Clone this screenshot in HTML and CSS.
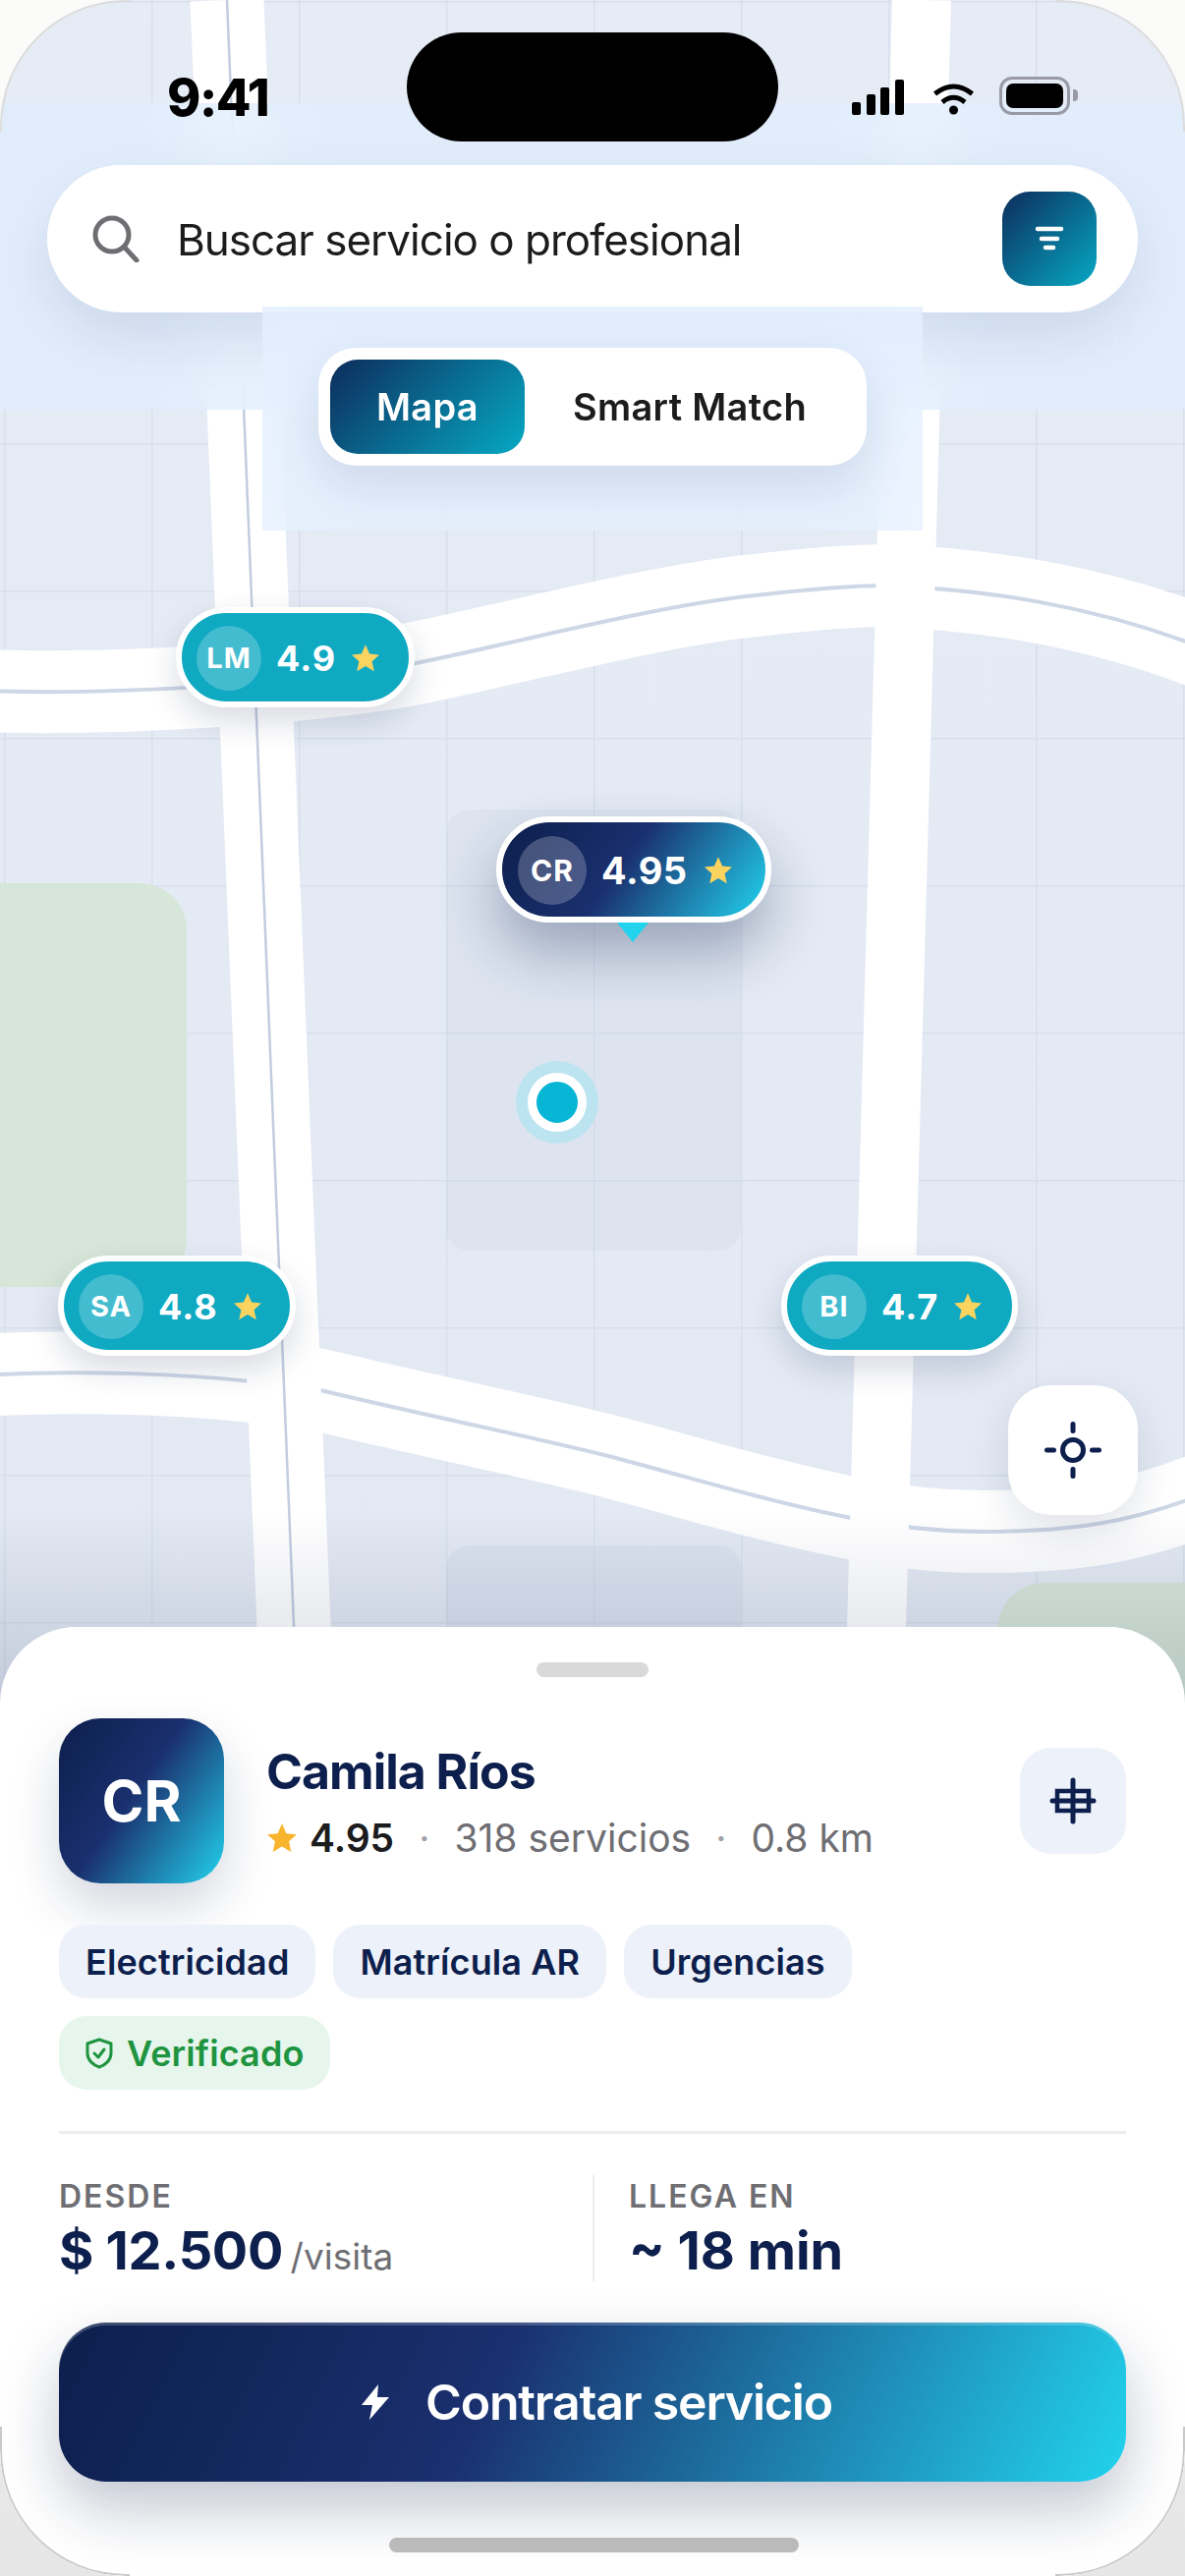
FILE: index.html
```html
<!DOCTYPE html>
<html lang="en">

<head>
  <meta charset="UTF-8">
  <title>Buscar servicio</title>
  <link rel="stylesheet" href="styles.css">
</head>

<body>
  <svg class="defs" width="0" height="0">
    <symbol id="star" viewBox="0 0 24 24">
      <path d="M12 1l3.3 7.400 7.900.8-5.900 5.300 1.700 8L12 18.400l-7 4.100 1.700-8L.8 9.200l7.900-.8z" />
    </symbol>
  </svg>

  <div class="phone">
    <div class="map">
      <svg class="map-canvas" viewBox="0 0 1206 1800" width="1206" height="1800">
        <defs>
          <pattern id="grid" x="4" y="1" width="150" height="150" patternUnits="userSpaceOnUse">
            <path d="M0 0V150M0 0H150" fill="none" stroke="#d8dfeb" stroke-width="3" />
          </pattern>
        </defs>
        <rect width="1206" height="1800" fill="url(#grid)" />
        <rect x="454" y="824" width="300" height="449" rx="24" fill="#c3cde0" opacity=".2" />
        <rect x="454" y="1573" width="300" height="300" rx="24" fill="#c3cde0" opacity=".25" />
        <rect x="-60" y="899" width="250" height="411" rx="48" fill="#d6e6d8" />
        <rect x="1015" y="1611" width="260" height="300" rx="48" fill="#d6e6d8" />

        <path class="road" d="M-20 703C120 708 323 695 423 675C523 655 669 616 769 606C830 599 880 596 900 596C1000 600 1110 615 1226 660" />
        <path class="road-line" d="M-20 703C120 708 323 695 423 675C523 655 669 616 769 606C830 599 880 596 900 596C1000 600 1110 615 1226 660" />
        <path class="road" d="M-20 1400C60 1395 200 1395 326 1415C430 1440 530 1460 615 1481C700 1503 780 1528 866 1545C920 1556 960 1559 1000 1559C1090 1559 1150 1550 1226 1520" />
        <path class="road-line" d="M-20 1400C60 1395 200 1395 326 1415C430 1440 530 1460 615 1481C700 1503 780 1528 866 1545C920 1556 960 1559 1000 1559C1090 1559 1150 1550 1226 1520" />

        <path class="road road-v" d="M231 0L305 1800" />
        <path class="road-line thin" d="M231 0L305 1800" />
        <path class="road road-w" d="M938 0L888 1800" />
      </svg>
      <div class="map-fade"></div>

      <div class="you-dot"><span></span></div>

      <div class="pin pin-lm">
        <span class="pin-avatar">LM</span>
        <span class="pin-score">4.9</span>
        <svg class="pin-star"><use href="#star" /></svg>
      </div>

      <div class="pin pin-main">
        <span class="pin-avatar">CR</span>
        <span class="pin-score">4.95</span>
        <svg class="pin-star"><use href="#star" /></svg>
        <i class="pin-tail"></i>
      </div>

      <div class="pin pin-sa">
        <span class="pin-avatar">SA</span>
        <span class="pin-score">4.8</span>
        <svg class="pin-star"><use href="#star" /></svg>
      </div>

      <div class="pin pin-bi">
        <span class="pin-avatar">BI</span>
        <span class="pin-score">4.7</span>
        <svg class="pin-star"><use href="#star" /></svg>
      </div>

      <button class="locate">
        <svg width="60" height="60" viewBox="0 0 60 60" fill="none" stroke="#0d1f4c" stroke-width="5" stroke-linecap="round">
          <circle cx="30" cy="30" r="10.500" />
          <path d="M30 3.500V10.500M30 49.500V56.500M3.500 30H10.500M49.500 30H56.500" />
        </svg>
      </button>
    </div>

    <div class="glass-band"></div>

    <div class="status">
      <span class="clock">9:41</span>
      <div class="island"></div>
      <div class="status-icons">
        <svg width="53" height="36" viewBox="0 0 53 36">
          <rect x="0" y="23" width="9" height="13" rx="2" />
          <rect x="15" y="15" width="9" height="21" rx="2" />
          <rect x="29" y="8" width="9" height="28" rx="2" />
          <rect x="44" y="0" width="9" height="36" rx="2" />
        </svg>
        <svg width="41" height="32" viewBox="0 0 41 32" fill="none" stroke="#000" stroke-width="5">
          <path d="M1.500 10.500Q20.500 -4.500 39.500 10.500" />
          <path d="M9 19Q20.500 9.500 32 19" />
          <circle cx="20.500" cy="27" r="4.500" fill="#000" stroke="none" />
        </svg>
        <div class="battery"><span></span></div>
      </div>
    </div>

    <div class="search">
      <svg class="search-icon" width="48" height="48" viewBox="0 0 48 48" fill="none" stroke="#6e6e73" stroke-width="5" stroke-linecap="round">
        <circle cx="20" cy="20" r="17" />
        <path d="M33 33L45 46" />
      </svg>
      <span class="search-text">Buscar servicio o profesional</span>
      <button class="filter">
        <svg width="30" height="26" viewBox="0 0 30 26" fill="none" stroke="#fff" stroke-width="4.500" stroke-linecap="round">
          <path d="M3 3H27M7 13H23M11 22H19" />
        </svg>
      </button>
    </div>

    <div class="glass-panel"></div>

    <div class="segment">
      <span class="seg-item seg-active">Mapa</span>
      <span class="seg-item">Smart Match</span>
    </div>

    <div class="sheet">
      <div class="handle"></div>

      <div class="pro">
        <div class="pro-avatar">CR</div>
        <div class="pro-info">
          <h2 class="pro-name">Camila Ríos</h2>
          <div class="pro-meta">
            <svg class="meta-star"><use href="#star" /></svg>
            <b>4.95</b>
            <i>·</i>
            <span>318 servicios</span>
            <i>·</i>
            <span>0.8 km</span>
          </div>
        </div>
        <button class="pro-action">
          <svg width="52" height="52" viewBox="0 0 52 52" fill="none" stroke="#0d1f4c" stroke-width="5" stroke-linecap="round">
            <rect x="10" y="16" width="32" height="20" stroke-width="4.500" stroke-linecap="butt" />
            <path d="M26 5V47M5 26H47" />
          </svg>
        </button>
      </div>

      <div class="chips">
        <span class="chip">Electricidad</span>
        <span class="chip">Matrícula AR</span>
        <span class="chip">Urgencias</span>
        <span class="chip chip-ok">
          <svg width="28" height="32" viewBox="0 0 28 32" fill="none" stroke="#1f9440" stroke-width="3" stroke-linejoin="round" stroke-linecap="round">
            <path d="M14 2L26 6V16C26 23 20 28 14 30C8 28 2 23 2 16V6Z" />
            <path d="M9 16L13 20L19 12" />
          </svg>
          Verificado
        </span>
      </div>

      <div class="stats">
        <div class="stat">
          <div class="stat-label">DESDE</div>
          <div class="stat-value">$ 12.500 <small>/visita</small></div>
        </div>
        <div class="stat stat-right">
          <div class="stat-label">LLEGA EN</div>
          <div class="stat-value">~ 18 min</div>
        </div>
      </div>

      <button class="cta">
        <svg width="30" height="36" viewBox="0 0 30 36" fill="#fff">
          <path d="M18 0L1 21H12L9 36L29 13H17Z" />
        </svg>
        Contratar servicio
      </button>

      <div class="home-bar"></div>
    </div>
  </div>
</body>

</html>
```

FILE: styles.css
```css
* {
  box-sizing: border-box;
}

html,
body {
  margin: 0;
  height: 100%;
  overflow: hidden;
}

body {
  background: linear-gradient(180deg, #fbfbfa 0%, #f4f4f4 60%, #e6e6e6 100%);
  font-family: Inter, "Liberation Sans", sans-serif;
  color: #1c1c1e;
}

button {
  border: none;
  padding: 0;
  font-family: inherit;
  cursor: pointer;
}

.defs {
  position: absolute;
}

.phone {
  position: relative;
  width: 1206px;
  height: 2622px;
  display: flex;
  flex-direction: column;
  overflow: hidden;
  border-radius: 128px;
}

/* thin frame, only seen on the rounded corners */
.phone::before,
.phone::after {
  content: "";
  position: absolute;
  z-index: 5;
  left: 0;
  right: 0;
  pointer-events: none;
  -webkit-mask-image: linear-gradient(90deg, #000 132px, transparent 132px, transparent 1074px, #000 1074px);
  mask-image: linear-gradient(90deg, #000 132px, transparent 132px, transparent 1074px, #000 1074px);
}

.phone::before {
  top: 0;
  height: 132px;
  border: 2px solid #dcdcda;
  border-bottom: none;
  border-radius: 128px 128px 0 0;
}

.phone::after {
  bottom: 0;
  height: 150px;
  border: 2px solid #c9c9c9;
  border-top: none;
  border-radius: 0 0 128px 128px;
}

/* map canvas */
.map {
  position: relative;
  flex: 1;
  margin-bottom: -80px;
  overflow: hidden;
  background: linear-gradient(180deg, #e6ecf5 0%, #e3e9f3 100%);
}

.map-canvas {
  position: absolute;
  top: 0;
  left: 0;
}

.road {
  fill: none;
  stroke: #fff;
  stroke-width: 84;
}

.road-v {
  stroke-width: 75;
}

.road-w {
  stroke-width: 60;
}

.road-line {
  fill: none;
  stroke: #cdd7e6;
  stroke-width: 4;
}

.road-line.thin {
  stroke: #c3cddf;
  stroke-width: 2.500;
}

.map-fade {
  position: absolute;
  left: 0;
  right: 0;
  bottom: 0;
  height: 200px;
  background: linear-gradient(180deg, rgba(13, 31, 76, 0) 0%, rgba(13, 31, 76, 0.16) 100%);
}

.you-dot {
  position: absolute;
  left: 525px;
  top: 1080px;
  width: 84px;
  height: 84px;
  display: flex;
  align-items: center;
  justify-content: center;
  border-radius: 50%;
  background: #bbe4f0;
}

.you-dot span {
  width: 60px;
  height: 60px;
  border-radius: 50%;
  border: 9px solid #fff;
  background: #07b6d5;
}

.pin {
  position: absolute;
  display: flex;
  align-items: center;
  height: 102px;
  padding: 1px 0 0 15px;
  border: 6px solid #fff;
  border-radius: 51px;
  background: #0fa9c2;
  box-shadow: 0 14px 32px rgba(13, 31, 76, 0.16);
  color: #fff;
}

.pin-lm {
  left: 179px;
  top: 618px;
  width: 243px;
}

.pin-sa {
  left: 59px;
  top: 1278px;
  width: 242px;
}

.pin-bi {
  left: 795px;
  top: 1278px;
  width: 241px;
}

.pin-main {
  left: 505px;
  top: 831px;
  width: 280px;
  height: 108px;
  border-radius: 54px;
  padding-left: 16px;
  background: linear-gradient(125deg, #0d1f4c 0%, #1a2f6e 45%, #22d3ee 100%);
  box-shadow: 0 30px 60px rgba(13, 31, 76, 0.32);
}

.pin-avatar {
  width: 66px;
  height: 66px;
  display: flex;
  align-items: center;
  justify-content: center;
  border-radius: 50%;
  background: rgba(255, 255, 255, 0.22);
  font-size: 29px;
  font-weight: 700;
  letter-spacing: 1px;
}

.pin-main .pin-avatar {
  width: 70px;
  height: 70px;
  font-size: 30px;
}

.pin-score {
  margin-left: 15px;
  font-size: 36px;
  font-weight: 700;
  letter-spacing: 1px;
}

.pin-main .pin-score {
  font-size: 38px;
  letter-spacing: 0.500px;
}

.pin-star {
  width: 30px;
  height: 30px;
  margin-left: 15px;
  fill: #fbd35f;
}

.pin-main .pin-star {
  margin-left: 16px;
}

.pin-tail {
  position: absolute;
  left: 117px;
  bottom: -26px;
  width: 0;
  height: 0;
  border-left: 16px solid transparent;
  border-right: 16px solid transparent;
  border-top: 20px solid #22d3ee;
}

.locate {
  position: absolute;
  left: 1026px;
  top: 1410px;
  width: 132px;
  height: 132px;
  display: flex;
  align-items: center;
  justify-content: center;
  border-radius: 44px;
  background: #fff;
  box-shadow: 0 16px 40px rgba(13, 31, 76, 0.12);
}

/* frosted layers over the map */
.glass-band {
  position: absolute;
  left: 0;
  right: 0;
  top: 105px;
  height: 312px;
  background: rgba(224, 237, 254, 0.75);
  backdrop-filter: blur(30px);
}

.glass-panel {
  position: absolute;
  left: 267px;
  top: 312px;
  width: 672px;
  height: 228px;
  background: rgba(228, 240, 255, 0.75);
  backdrop-filter: blur(30px);
}

.status {
  position: absolute;
  top: 0;
  left: 0;
  right: 0;
  height: 150px;
}

.clock {
  position: absolute;
  left: 170px;
  top: 70px;
  font-size: 52px;
  line-height: 60px;
  font-weight: 800;
  letter-spacing: -1.500px;
  color: #000;
}

.island {
  position: absolute;
  left: 414px;
  top: 33px;
  width: 378px;
  height: 111px;
  border-radius: 56px;
  background: #000;
}

.status-icons {
  position: absolute;
  left: 867px;
  top: 78px;
  display: flex;
  align-items: flex-end;
  gap: 30px;
  height: 39px;
}

.battery {
  position: relative;
  width: 72px;
  height: 39px;
  margin-left: -4px;
  padding: 4px;
  border: 3px solid #989aa5;
  border-radius: 13px;
}

.battery span {
  display: block;
  height: 100%;
  border-radius: 7px;
  background: #000;
}

.battery::after {
  content: "";
  position: absolute;
  right: -11px;
  top: 10px;
  width: 5px;
  height: 12px;
  border-radius: 0 4px 4px 0;
  background: #989aa5;
}

.search {
  position: absolute;
  left: 48px;
  top: 168px;
  width: 1110px;
  height: 150px;
  display: flex;
  align-items: center;
  padding: 0 42px 0 46px;
  border-radius: 75px;
  background: #fff;
  box-shadow: 0 24px 60px rgba(13, 31, 76, 0.1);
}

.search-icon {
  flex: none;
}

.search-text {
  flex: 1;
  margin-left: 38px;
  padding-top: 2px;
  font-size: 44px;
  letter-spacing: -1px;
}

.filter {
  width: 96px;
  height: 96px;
  display: flex;
  align-items: center;
  justify-content: center;
  border-radius: 28px;
  background: linear-gradient(135deg, #0d2c5c 0%, #06a9c4 100%);
}

.segment {
  position: absolute;
  left: 324px;
  top: 354px;
  width: 558px;
  height: 120px;
  display: flex;
  align-items: center;
  padding: 0 12px;
  border-radius: 38px;
  background: #fff;
  box-shadow: 0 20px 50px rgba(13, 31, 76, 0.1);
}

.seg-item {
  flex: 1;
  text-align: center;
  font-size: 38px;
  font-weight: 600;
  letter-spacing: 0.300px;
}

.seg-active {
  flex: none;
  width: 198px;
  height: 96px;
  line-height: 96px;
  border-radius: 28px;
  background: linear-gradient(135deg, #0d2c5c 0%, #06a9c4 100%);
  color: #fff;
}

/* bottom sheet */
.sheet {
  position: relative;
  flex: none;
  height: 966px;
  padding: 36px 60px 0;
  border-radius: 78px 78px 0 0;
  background: #fff;
}

.handle {
  width: 114px;
  height: 15px;
  margin: 0 auto 42px;
  border-radius: 8px;
  background: #d9d9d9;
}

.pro {
  display: flex;
  align-items: center;
  height: 168px;
}

.pro-avatar {
  width: 168px;
  height: 168px;
  display: flex;
  align-items: center;
  justify-content: center;
  border-radius: 42px;
  background: linear-gradient(125deg, #0d1f4c 0%, #1a2f6e 45%, #22d3ee 100%);
  box-shadow: 0 24px 50px rgba(13, 31, 76, 0.18);
  color: #fff;
  font-size: 58px;
  font-weight: 700;
}

.pro-info {
  flex: 1;
  margin-left: 43px;
}

.pro-name {
  margin: 0 0 15px;
  font-size: 50px;
  line-height: 60px;
  font-weight: 700;
  letter-spacing: -1px;
  color: #0d1f4c;
}

.pro-meta {
  display: flex;
  align-items: center;
  font-size: 39px;
  line-height: 46px;
  color: #6e6e73;
}

.pro-meta b {
  font-size: 39px;
  font-weight: 600;
  color: #1c1c1e;
  margin-left: 12px;
}

.pro-meta i {
  font-style: normal;
  margin: 0 25px;
  color: #a0a0a6;
}

.meta-star {
  width: 32px;
  height: 32px;
  fill: #f9b42d;
}

.pro-action {
  width: 108px;
  height: 108px;
  display: flex;
  align-items: center;
  justify-content: center;
  border-radius: 32px;
  background: #edf1fa;
}

.chips {
  display: flex;
  flex-wrap: wrap;
  gap: 18px;
  margin-top: 42px;
  width: 900px;
}

.chip {
  display: flex;
  align-items: center;
  height: 75px;
  padding: 0 27px;
  border-radius: 28px;
  background: #edf1fa;
  color: #0d1f4c;
  font-size: 36px;
  font-weight: 600;
  letter-spacing: 0.100px;
}

.chip-ok {
  gap: 14px;
  background: #e6f6ec;
  color: #1f9440;
}

.stats {
  display: grid;
  grid-template-columns: 1fr 1fr;
  grid-template-rows: 108px;
  height: 153px;
  margin-top: 42px;
  padding-top: 42px;
  border-top: 3px solid #ececee;
}

.stat-right {
  padding-left: 35px;
  border-left: 2px solid #ececee;
}

.stat-right .stat-value {
  letter-spacing: 0;
}

.stat-label {
  margin-top: 2px;
  font-size: 32px;
  line-height: 40px;
  font-weight: 600;
  letter-spacing: 2px;
  color: #6e6e73;
}

.stat-value {
  margin-top: 5px;
  font-size: 54px;
  line-height: 60px;
  font-weight: 700;
  letter-spacing: -0.300px;
  color: #0d1f4c;
}

.stat-value small {
  margin-left: -5px;
  font-size: 37px;
  font-weight: 400;
  letter-spacing: 0;
  color: #6e6e73;
}

.cta {
  display: flex;
  align-items: center;
  justify-content: center;
  gap: 36px;
  width: 100%;
  height: 162px;
  margin-top: 42px;
  padding-left: 8px;
  border-radius: 48px;
  background: linear-gradient(116deg, #0d1f4c 0%, #1a2f6e 40%, #22d3ee 100%);
  box-shadow: 0 28px 60px rgba(13, 31, 76, 0.25), inset 0 3px 0 rgba(255, 255, 255, 0.2);
  color: #fff;
  font-size: 50px;
  font-weight: 600;
  letter-spacing: -1.200px;
}

.home-bar {
  width: 417px;
  height: 15px;
  margin: 57px 0 0 336px;
  border-radius: 8px;
  background: #bababa;
}
```
